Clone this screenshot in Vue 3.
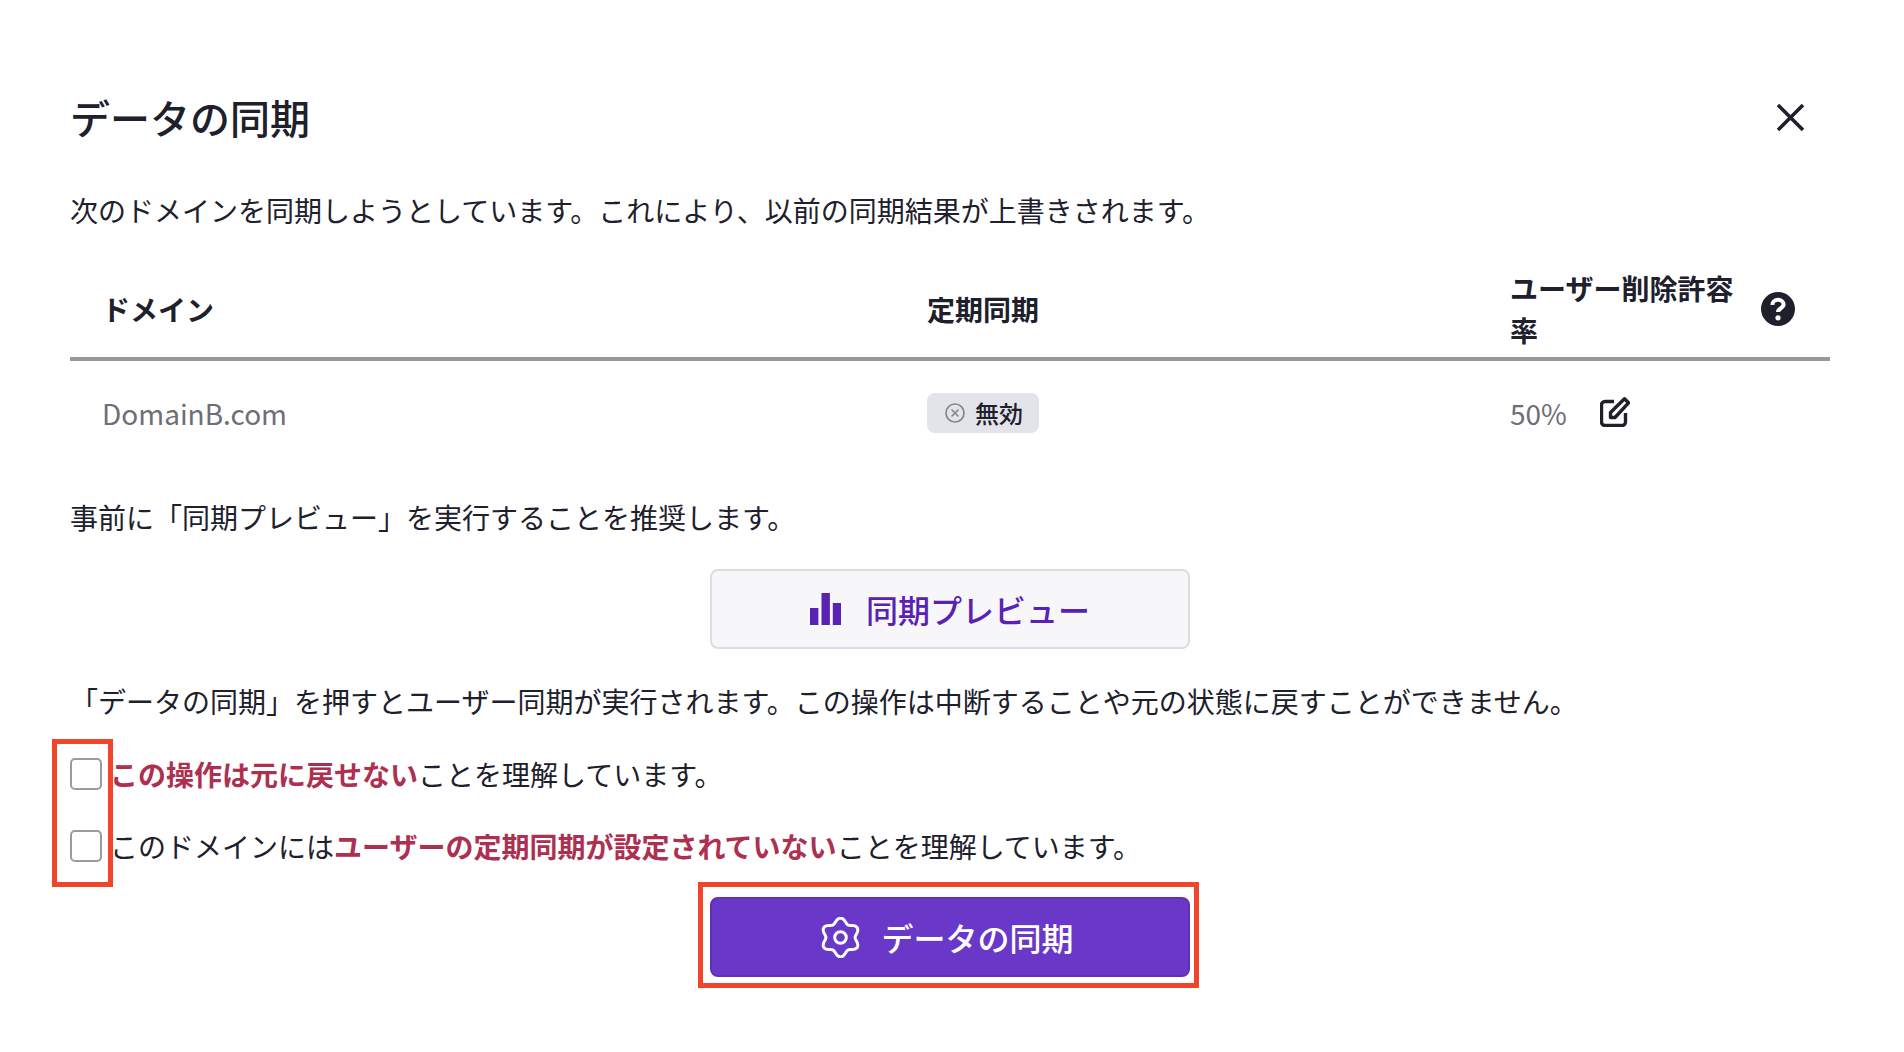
<script setup>
const gearPoints = []
for (let i = 0; i < 120; i++) {
  const t = (i / 120) * Math.PI * 2
  const r = 17 + 2.4 * Math.cos(6 * t)
  gearPoints.push(`${(20.5 + r * Math.sin(t)).toFixed(2)} ${(20.5 - r * Math.cos(t)).toFixed(2)}`)
}
const gearPath = 'M' + gearPoints.join('L') + 'Z'
</script>
<template>
<div class="modal">
  <div class="head"><h2>データの同期</h2>
    <svg class="close" viewBox="0 0 29 29"><path d="M2 2L27 27M27 2L2 27" fill="none" stroke="#20202c" stroke-width="3.6"/></svg>
  </div>
  <p class="intro">次のドメインを同期しようとしています。これにより、以前の同期結果が上書きされます。</p>
  <div class="thead">
    <div class="c1">ドメイン</div><div class="c2">定期同期</div>
    <div class="c3"><span class="wrap">ユーザー削除許容率</span>
      <svg class="help" viewBox="0 0 34 34"><circle cx="17" cy="17" r="17" fill="#20202c"/><path d="M11.4 13c0-3 2.4-5.2 5.6-5.2s5.6 2.2 5.6 4.8c0 3.8-5.6 3.4-5.6 7.4" fill="none" stroke="#fff" stroke-width="4"/><circle cx="17" cy="25.8" r="2.6" fill="#fff"/></svg>
    </div>
  </div>
  <div class="trow">
    <div class="c1 gray">DomainB.com</div>
    <div class="c2"><span class="badge">
      <svg class="xicon" viewBox="0 0 20 20"><circle cx="10" cy="10" r="9" fill="none" stroke="#85858c" stroke-width="1.7"/><path d="M6.5 6.5L13.5 13.5M13.5 6.5L6.5 13.5" stroke="#85858c" stroke-width="1.6"/></svg>
      無効</span></div>
    <div class="c3 gray val">50%
      <svg class="edit" viewBox="0 0 30 30" fill="none" stroke="#20202c" stroke-width="3.4"><path d="M14 4.5H5A3.5 3.5 0 0 0 1.5 8v17A3.5 3.5 0 0 0 5 28.5h17a3.5 3.5 0 0 0 3.5-3.5V16"/><path d="M10.5 20.5v-5L24.5 1.8l4 4L15 20.5z" stroke-linejoin="round"/></svg>
    </div>
  </div>
  <p class="rec">事前に「同期プレビュー」を実行することを推奨します。</p>
  <div class="center"><button class="preview">
    <svg class="bars" viewBox="0 0 31 32"><rect x="0" y="15" width="8.4" height="17"/><rect x="11.5" y="0" width="8.4" height="32"/><rect x="22.8" y="10" width="8.2" height="22"/></svg>
    同期プレビュー</button></div>
  <p class="warn">「データの同期」を押すとユーザー同期が実行されます。この操作は中断することや元の状態に戻すことができません。</p>
  <label class="chk first"><input type="checkbox"><span><b>この操作は元に戻せない</b>ことを理解しています。</span></label>
  <label class="chk"><input type="checkbox"><span>このドメインには<b>ユーザーの定期同期が設定されていない</b>ことを理解しています。</span></label>
  <div class="center"><button class="sync">
    <svg class="gear" viewBox="0 0 41 41" fill="none" stroke="#fff" stroke-width="3"><path :d="gearPath" stroke-linejoin="round"/><circle cx="20.5" cy="20.5" r="5.8"/></svg>
    データの同期</button></div>
  <div class="mark mark-check"></div>
  <div class="mark mark-btn"></div>
</div>
</template>
<style>
body{background:#fff}
</style>
<style scoped>
.modal{position:relative;box-sizing:border-box;width:1760px;height:1052px;margin-left:70px;padding-top:89px;font-family:"Noto Sans CJK JP",sans-serif;color:#20202c;font-size:28px;line-height:42px}
.head{display:flex;justify-content:space-between;align-items:center;padding-right:25px;height:60px}
h2{margin:0 0 4px;font-size:40px;font-weight:500;line-height:60px}
.close{width:29px;height:29px;margin-bottom:4px}
p{margin:0}
.intro{margin-top:40px}
.thead,.trow{display:grid;grid-template-columns:857px 583px 1fr}
.c1{padding-left:32px}
.thead{margin-top:36px;border-bottom:4px solid #98989c;font-weight:700;height:84px;padding-bottom:6px;align-items:center}
.c3{display:flex;align-items:center;gap:27px}
.wrap{width:224px}
.help{width:34px;height:34px}
.trow{height:108px;align-items:center}
.trow .c1,.trow .c2,.trow .c3{margin-bottom:4px}
.gray{color:#6e6e78}
.val{gap:33px}
.edit{width:30px;height:30px;margin-bottom:2px}
.badge{display:inline-flex;align-items:center;gap:10px;box-sizing:border-box;width:112px;height:40px;padding-left:18px;background:#e3e3ea;border-radius:8px;font-size:24px;font-weight:500;line-height:40px;margin-bottom:4px;vertical-align:middle}
.xicon{width:20px;height:20px}
.rec{margin-top:27px}
.center{display:flex;justify-content:center}
.preview,.sync{display:flex;align-items:center;justify-content:center;box-sizing:border-box;width:480px;height:80px;border-radius:8px;font:500 32px/40px "Noto Sans CJK JP",sans-serif;padding:0}
.preview{gap:25px;background:#f7f7fa;border:2px solid #dcdce3;color:#5a21b5;margin-top:31px}
.bars{width:31px;height:32px;fill:#5a21b5}
.warn{margin-top:31px}
.chk{display:flex;align-items:center;gap:8px;margin-top:30px}
.chk.first{margin-top:31px}
input{appearance:none;box-sizing:border-box;width:32px;height:32px;margin:0;background:#fff;border:2px solid #9a9a9f;border-radius:5px}
b{color:#ad3050;font-weight:700}
.sync{gap:20px;background:#6a38c8;border:2px solid #5f30b3;color:#fff;margin-top:30px;padding-right:6px}
.gear{width:41px;height:41px}
.mark{position:absolute;box-sizing:border-box;border:5px solid #f0452a}
.mark-check{left:-18px;top:739px;width:61px;height:148px}
.mark-btn{left:628px;top:882px;width:501px;height:106px}
</style>
